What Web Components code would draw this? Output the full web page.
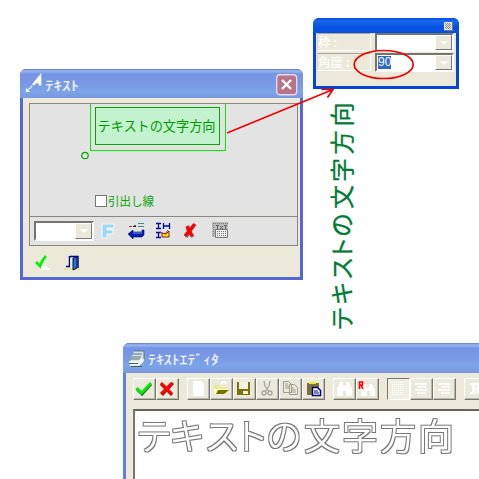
<!DOCTYPE html>
<html lang="ja"><head><meta charset="utf-8"><title>テキスト</title>
<style>
html,body{margin:0;width:479px;height:479px;overflow:hidden;background:#fff;font:12px "Noto Sans CJK JP",sans-serif}
:root{--beige:repeating-conic-gradient(#efe9d2 0 25%,#e9e9e2 0 50%) 0 0/2px 2px;--blue:linear-gradient(#647bd5,#99b7ee 2px,#7593e4 5px,#7999e4 15px,#7ba4e8 22px,#7c98df)}
body{position:relative}
xp-window{position:absolute}
#dialog{left:20px;top:69px;width:283px;height:211px}
#palette{left:313px;top:18px;width:146px;height:71px}
#editor{left:123px;top:343px;width:356px;height:136px;padding:0 0 0 3px;border-radius:6px 0 0 0}
arrow-note,turned-text{position:absolute;left:0;top:0;pointer-events:none}
</style></head><body>
<xp-window id="dialog" style="--title:29px;--edge:#5268d4">
 <tool-icon slot="icon" name="leader" w="20" h="20" style="margin:4px 0 0 5px"></tool-icon>
 <title-text slot="caption" text="ﾃｷｽﾄ" w="34"></title-text>
 <tool-icon slot="close" name="close" w="22" h="22" style="margin:5px 5px 0 0"></tool-icon>
 <text-dialog></text-dialog>
</xp-window>
<xp-window id="palette" style="--title:15px;--edge:#0646d6;--bar:linear-gradient(#064bdc,#1869ee 3px,#0754e2 8px,#0750df)">
 <tool-icon slot="close" name="mini" w="9" h="9" style="margin:4px 6px 0 0"></tool-icon>
 <angle-panel></angle-panel>
</xp-window>
<xp-window id="editor" style="--title:30px;--edge:#6380df;--out:0px">
 <tool-icon slot="icon" name="pages" w="18" h="18" style="margin:7px 0 0 5px"></tool-icon>
 <title-text slot="caption" text="ﾃｷｽﾄｴﾃﾞｨﾀ" w="71" style="margin-left:2px"></title-text>
 <text-editor></text-editor>
</xp-window>
<turned-text></turned-text>
<arrow-note></arrow-note>
<script>
const define=(name,render)=>customElements.define(name,class extends HTMLElement{
 connectedCallback(){if(!this.shadowRoot)this.attachShadow({mode:'open'}).innerHTML=render(this)}
});
const icons={
leader:'<path d="M2 18L7 13" stroke="#fff" stroke-width="1.5" stroke-dasharray="2 .7"/><path d="M1 15v4h4z" fill="#fff"/><path d="M8 12L15 3.500v9M10 9h6" stroke="#fff" stroke-width="2.600" fill="none"/>',
close:'<rect x=".7" y=".7" width="20" height="20" rx="3" fill="#b87589" stroke="#e3d9ed" stroke-width="1.4"/><path d="M6 6L15 15M15 6L6 15" stroke="#fff" stroke-width="2.4"/>',
mini:'<path d="M0 0h9v9H0z" fill="#e7e5dd"/><path d="M1 1.500h6M1 3.500h6M1 5.500h6" stroke="#888" stroke-dasharray="1 1"/><path d="M2 2.500h5M2 4.500h5M2 6.500h5" stroke="#888" stroke-dasharray="1 1"/><path d="M0 8.5h8.5V0" fill="none" stroke="#777"/>',
pages:'<path d="M6 1h10v10l-5 4H1z" fill="#d7e2e2"/><path d="M6 1h10v8M5 4h9M4 7h9M3 9h9" fill="none" stroke="#58797c"/><path d="M1 12h9l5-3M2 15h9l4-4" fill="none" stroke="#fff" stroke-width="1.5"/><path d="M1 13.5h9M3 16.5h11" stroke="#405c63"/>',
f:'<path d="M3 16V2h12v4H8v2h6v4H8v4z" fill="#9edbf3" stroke="#fff" stroke-width=".8"/>',
back:'<path d="M2 4.500h3M7 3.500h2" stroke="#934766" stroke-width="1.2"/><path d="M11 1.500h6M11 4.500h6" stroke="#438b91"/><path d="M6 4.500h3" stroke="#222"/><path d="M1 12l5-4v2h9V8h2v5l-2 2H6v2z" fill="#0020ac" stroke="#001070" stroke-width=".6"/><path d="M6 11h9" stroke="#739af0"/>',
measure:'<path d="M1 1.5h5M3.5 2v4M1 6.5h5M1 10.5h5M3.5 11v5M1 15.5h5M8.5 1v6M14.5 1v6M9 4h6" stroke="#0009a0" stroke-width="1.3"/><path d="M7 15V11l4 1 3-3v6z" fill="#ffe600" stroke="#801d25"/><path d="M5 10l5 2 3-4" fill="none" stroke="#a04040"/>',
bigx:'<path d="M3 15L11 3M4 6l6 9" stroke="#777" stroke-width="3.5"/><path d="M2 14L12 2M4 4l5 10" stroke="#f00" stroke-width="3.4"/>',
txt:'<path d="M0 0h16v15H0z" fill="#bbb"/><path d="M1 1.5h15M1.500 3v12" stroke="#777" stroke-dasharray="1 1"/><path d="M4 3.500h3M5.5 3v4M8 4l3 3M11 4L8 7M12 3.500h3M13.5 3v4" stroke="#666"/><path d="M3.5 7.5h12v8h-12z" fill="#eee" stroke="#777"/><path d="M5 9.500h9M5 11.500h9M5 13.500h9" stroke="#777" stroke-dasharray="1 1"/>',
ok:'<path d="M7 12l4 0 4 2 1 2H8z" fill="#fff"/><path d="M2 8l4 4Q8 6 12 2" fill="none" stroke="#00f000" stroke-width="2.6"/>',
door:'<path d="M0 15h16" stroke="#e9e49b" stroke-width="2"/><path d="M2 12.5h4M5.5 2v11M6 2.5h8V14" stroke="#000b80" fill="none" stroke-width="1.5"/><path d="M9 4l4-1v11l-4 2z" fill="#2877bd" stroke="#00106c"/><path d="M7 4v9" stroke="#fff"/>',
apply:'<path d="M4 11l5 5L18 6" fill="none" stroke="#345d34" stroke-width="3"/><path d="M3.500 10l5 5L18 5" fill="none" stroke="#00ef00" stroke-width="2.800"/>',
redx:'<path d="M5 6l11 11M17 5L6 17" stroke="#8a2920" stroke-width="3"/><path d="M5 5l11 11M16 5L5 16" stroke="#f00" stroke-width="3"/>',
new:'<path d="M6 3h8l3 3v12H6z" fill="#fff"/>',
open:'<path d="M4 7h5l1 2h7v7H4z" fill="#eee995"/><path d="M4 11h14l-5 5H4z" fill="#fffbc0"/><path d="M8 12h11l-5 4H6z" fill="#747100"/><path d="M11 6q3-4 6 0" fill="none" stroke="#fff" stroke-width="1.5"/>',
save:'<path d="M4 4h13v13H4z" fill="#777500"/><path d="M6 4h9v7H6zM8 13h7v3H8z" fill="#f3f1e6"/><path d="M8 13h2v3H8z" fill="#777500"/>',
cut:'<path d="M8 3l1 5 4 6M14 3l-1 5-4 6" fill="none" stroke="#aaa79d" stroke-width="1.3"/><circle cx="8" cy="15" r="2" fill="none" stroke="#aaa79d" stroke-width="1.5"/><circle cx="14" cy="15" r="2" fill="none" stroke="#aaa79d" stroke-width="1.5"/>',
copy:'<path d="M4.5 3.5h5l3 3v8h-8zM10.5 6.5h5l3 3v7h-8z" fill="#eeeae0" stroke="#9e9b91"/><path d="M6 6h3M6 8h5M6 10h5M12 10h3M12 12h5M12 14h5" stroke="#9e9b91"/>',
paste:'<path d="M5 5h12v12H5z" fill="#77723b"/><path d="M7 4h7v2H7z" fill="#eaea35"/><path d="M10.5 9.5h5l3 3v5h-8z" fill="#fff" stroke="#00007a" stroke-width="1.5"/><path d="M12 13h4M12 15h5" stroke="#00007a"/>',
find:'<path d="M7 4h3v4h3V4h3l3 7v7h-6v-5h-3v5H4v-7z" fill="#fff"/>',
replace:'<path d="M7 6h3v3h3V6h3l3 6v6h-5v-5h-3v5H5v-6z" fill="#fff"/><path d="M3.500 11V4h3v3H4M5 7l2 4" fill="none" stroke="#f00" stroke-width="1.6"/>',
left:'<path d="M5 4.500h12M5 6.500h12M5 8.500h12M5 10.500h12M5 12.500h12M5 14.500h12M5 16.500h12" stroke="#fff" stroke-dasharray="1 1"/>',
center:'<path d="M5 6h12M7 9h9M5 12h12M7 15h9" stroke="#fff" stroke-width="1.6"/>',
right:'<path d="M5 6h12M8 9h9M5 12h12M8 15h9" stroke="#fff" stroke-width="1.6"/>',
tab:'<path d="M6 5h7q3 0 3 3 0 2-2 3 3 1 3 3 0 2-3 2H6v-2h2V7H6zm5 2v3h2V7zm0 5v3h2v-3z" fill="#fff" fill-rule="evenodd"/>'
};
define('tool-icon',e=>{const w=e.getAttribute('w')||18,h=e.getAttribute('h')||18;return `<style>:host{display:block;flex:none}svg{display:block}</style><svg width="${w}" height="${h}" viewBox="0 0 ${w} ${h}" fill="none">${icons[e.getAttribute('name')]}</svg>`});
define('title-text',e=>`<style>:host{display:block}svg{display:block;overflow:visible}text{font:500 13px "Noto Sans CJK JP",sans-serif;fill:#f1f4ff}</style><svg width="${e.getAttribute('w')}" height="20"><text y="14" textLength="${e.getAttribute('w')}" lengthAdjust="spacingAndGlyphs">${e.getAttribute('text')}</text></svg>`);
define('xp-window',()=>`<style>:host{display:flex;flex-direction:column;box-sizing:border-box;padding:0 3px 3px;background:var(--edge);border-radius:6px 6px 0 0;overflow:hidden}
header{height:var(--title);margin:0 calc(0px - var(--out,3px)) 0 -3px;display:flex;align-items:flex-start;background:var(--bar,var(--blue));flex:none}
.cap{padding-top:7px;flex:1}main{flex:1;min-height:0;background:var(--beige)}</style><header><slot name="icon"></slot><div class="cap"><slot name="caption"></slot></div><slot name="close"></slot></header><main><slot></slot></main>`);
define('combo-box',()=>`<style>:host{display:flex;box-sizing:border-box;height:20px;border:2px solid;border-color:#77756b #fff #fff #77756b;background:#fff;padding:0}
.v{flex:1;padding:1px 0 0 1px}.b{width:17px;box-sizing:border-box;background:#ece9dc;border:1px solid;border-color:#fff #777 #777 #fff;display:flex;align-items:center;justify-content:center}.b:after{content:"";border:4px solid transparent;border-top-color:#fff;border-bottom:0}</style><div class="v"><slot></slot></div><div class="b"></div>`);
define('text-dialog',()=>`<style>:host{display:block;padding:5px 5px 0 6px}.panel{width:269px;height:143px;box-sizing:border-box;border:1px solid #88867f;background:#e4e3e3;display:flex;flex-direction:column}
.canvas{height:112px;border-bottom:1px solid #88867f}.canvas svg{display:block}.row{display:flex;flex:1;align-items:center;padding-left:4px}combo-box{width:60px;margin-right:5px}.row tool-icon{margin-right:10px}.row tool-icon:last-child{margin-left:1px}
footer{display:flex;padding:8px 0 0 5px;gap:12px}text{font-family:"Noto Sans CJK JP",sans-serif}</style>
<div class="panel"><div class="canvas"><svg width="267" height="112"><g shape-rendering="crispEdges" fill="none"><path d="M60.5 0v46.500h135V0" stroke="#00f000"/><rect x="65.500" y="3.500" width="124" height="37" fill="#c2f2ce" stroke="#00a800"/></g>
<text x="67.500" y="27" font-size="13.500" textLength="118" lengthAdjust="spacingAndGlyphs" fill="#009a00">テキストの文字方向</text><circle cx="55" cy="51.500" r="3.200" fill="none" stroke="#00a800" stroke-width="1.200"/>
<rect x="65.500" y="91.500" width="11" height="11" fill="#fff" stroke="#777"/><text x="78" y="101.500" font-size="12" textLength="46" lengthAdjust="spacingAndGlyphs" fill="#00a800">引出し線</text></svg></div>
<div class="row"><combo-box></combo-box><tool-icon name="f"></tool-icon><tool-icon name="back"></tool-icon><tool-icon name="measure"></tool-icon><tool-icon name="bigx"></tool-icon><tool-icon name="txt"></tool-icon></div></div>
<footer><tool-icon name="ok"></tool-icon><tool-icon name="door"></tool-icon></footer>`);
define('angle-panel',()=>`<style>:host{display:grid;grid-template-columns:54px 79px;column-gap:4px;row-gap:0;grid-auto-rows:20px;padding-left:1px}.l{box-sizing:border-box;height:18px;border:1px solid;border-color:#aaa594 #fff #fff #ddd6bd;color:#fff;font:500 12.500px/16px "Noto Sans CJK JP",sans-serif;white-space:pre}.l:nth-child(3){margin-top:1px}combo-box{height:19px}mark{display:block;width:13px;height:13px;font:12px/13px "Liberation Sans",sans-serif;background:#316ac5;color:#fff}</style><div class="l">枠 :</div><combo-box></combo-box><div class="l">角度 :</div><combo-box><mark>90</mark></combo-box>`);
define('tool-button',e=>`<style>:host{display:block;box-sizing:border-box;flex:none;width:23px;height:22px;border:1px solid;border-color:#fff #77756c #77756c #fff;box-shadow:inset -1px -1px #bbb8ab;background:#ebe8dc}:host([on]){border-color:#77756c #fff #fff #77756c;background:#f0ede3;box-shadow:none}tool-icon{margin:-1px}</style><tool-icon name="${e.getAttribute('name')}" w="22" h="21"></tool-icon>`);
define('text-editor',()=>`<style>:host{display:flex;flex-direction:column;box-sizing:border-box;height:106px;padding:5px 0 0 7px}nav{display:flex;gap:8px;height:31px;overflow:hidden;flex:none}.g{display:flex;flex:none}.g:last-child{flex:0 1 15px;min-width:0;overflow:hidden}.page{flex:1;background:#fff;border:2px solid #77756c;border-width:2px 0 0 2px;border-top-color:#66645c}svg{display:block;overflow:visible}text{font:350 36px "Noto Sans CJK JP",sans-serif;fill:#fff;text-anchor:middle}</style><nav>${['apply redx','new open save cut copy paste','find replace','left center right','tab'].map(g=>`<div class="g">${g.split(' ').map(n=>`<tool-button name="${n}" ${n==='left'?'on':''}></tool-button>`).join('')}</div>`).join('')}</nav><div class="page"><svg width="340" height="66"><filter id="outline" x="-5%" y="-20%" width="110%" height="140%" color-interpolation-filters="sRGB"><feMorphology in="SourceAlpha" operator="dilate" radius="1" result="wide"/><feFlood flood-color="#777"/><feComposite in2="wide" operator="in" result="edge"/><feMerge><feMergeNode in="edge"/><feMergeNode in="SourceGraphic"/></feMerge></filter><text filter="url(#outline)" y="39" x="19 52 87 116 149 187 225 263 301">テキストの文字方向</text></svg></div>`);
define('turned-text',()=>`<style>:host{display:block}svg{display:block}text{font:400 24px "Noto Sans CJK JP",sans-serif;fill:#007b35;stroke:#007b35;stroke-width:.3;text-anchor:middle}</style><svg width="479" height="479"><text transform="translate(351 329) rotate(-90)" y="0" x="10.500 35.500 60.500 80.500 104 132 159 186.500 214.500">テキストの文字方向</text></svg>`);
define('arrow-note',()=>`<style>:host{display:block}svg{display:block}</style><svg width="479" height="479" fill="none" stroke="#f00000" stroke-width="1.700"><path d="M227 133L333 89.500M321.500 89.500H333L327.500 97.500"/><ellipse cx="383.700" cy="64.500" rx="29.500" ry="14"/></svg>`);
</script></body></html>
